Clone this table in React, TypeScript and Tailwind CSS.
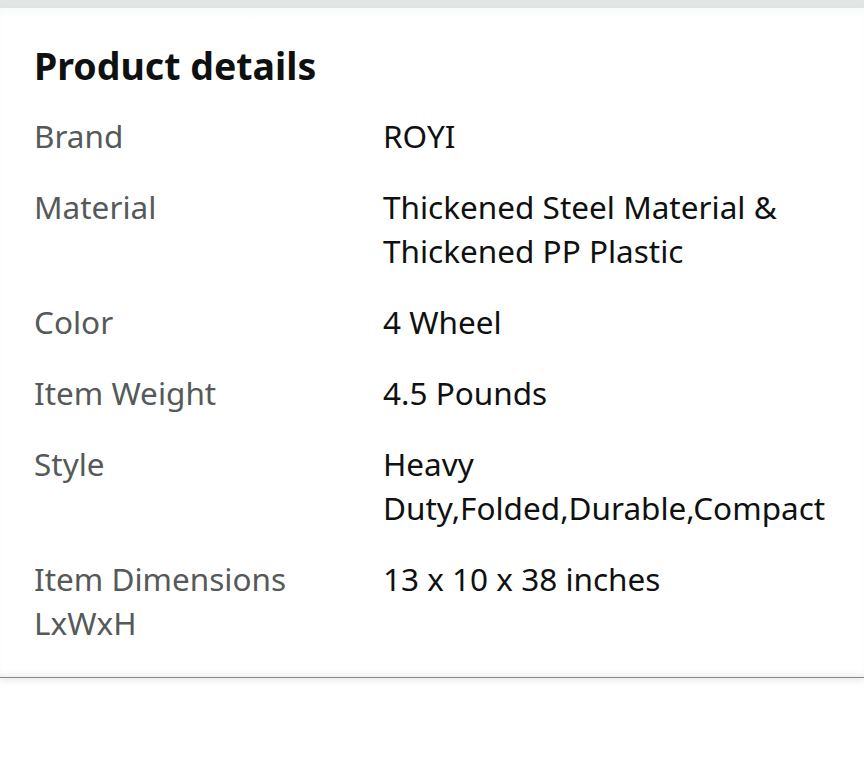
import React from 'react'

type Detail = {
  label: string
  value: string
}

const details: Detail[] = [
  { label: 'Brand', value: 'ROYI' },
  { label: 'Material', value: 'Thickened Steel Material & Thickened PP Plastic' },
  { label: 'Color', value: '4 Wheel' },
  { label: 'Item Weight', value: '4.5 Pounds' },
  { label: 'Style', value: 'Heavy Duty,Folded,Durable,Compact' },
  { label: 'Item Dimensions LxWxH', value: '13 x 10 x 38 inches' },
]

export default function App() {
  return (
    <div className="min-h-[784px] w-[864px] bg-white" style={{ fontFamily: '"Noto Sans", Arial, sans-serif' }}>
      <div className="h-2 w-full bg-[#e1e6e4]" />
      <div className="border-b border-[#8a8a8a] bg-gradient-to-b from-[#f8fdfd] to-white to-[12px] px-[34px] pb-[32px] pt-[36px] shadow-[0_-6px_8px_-6px_rgba(0,0,0,0.12)_inset,0_3px_6px_rgba(0,0,0,0.08)]">
        <h2 className="text-[37.5px] font-bold leading-[44px] text-[#0f1111]">Product details</h2>
        <div className="mt-[26px] flex flex-col gap-[27px]">
          {details.map((item) => (
            <div key={item.label} className="grid grid-cols-[349px_1fr] text-[31.5px] leading-[44px]">
              <span className="pr-4 text-[#565959]">{item.label}</span>
              <span className="text-[#0f1111]">{item.value}</span>
            </div>
          ))}
        </div>
      </div>
    </div>
  )
}
